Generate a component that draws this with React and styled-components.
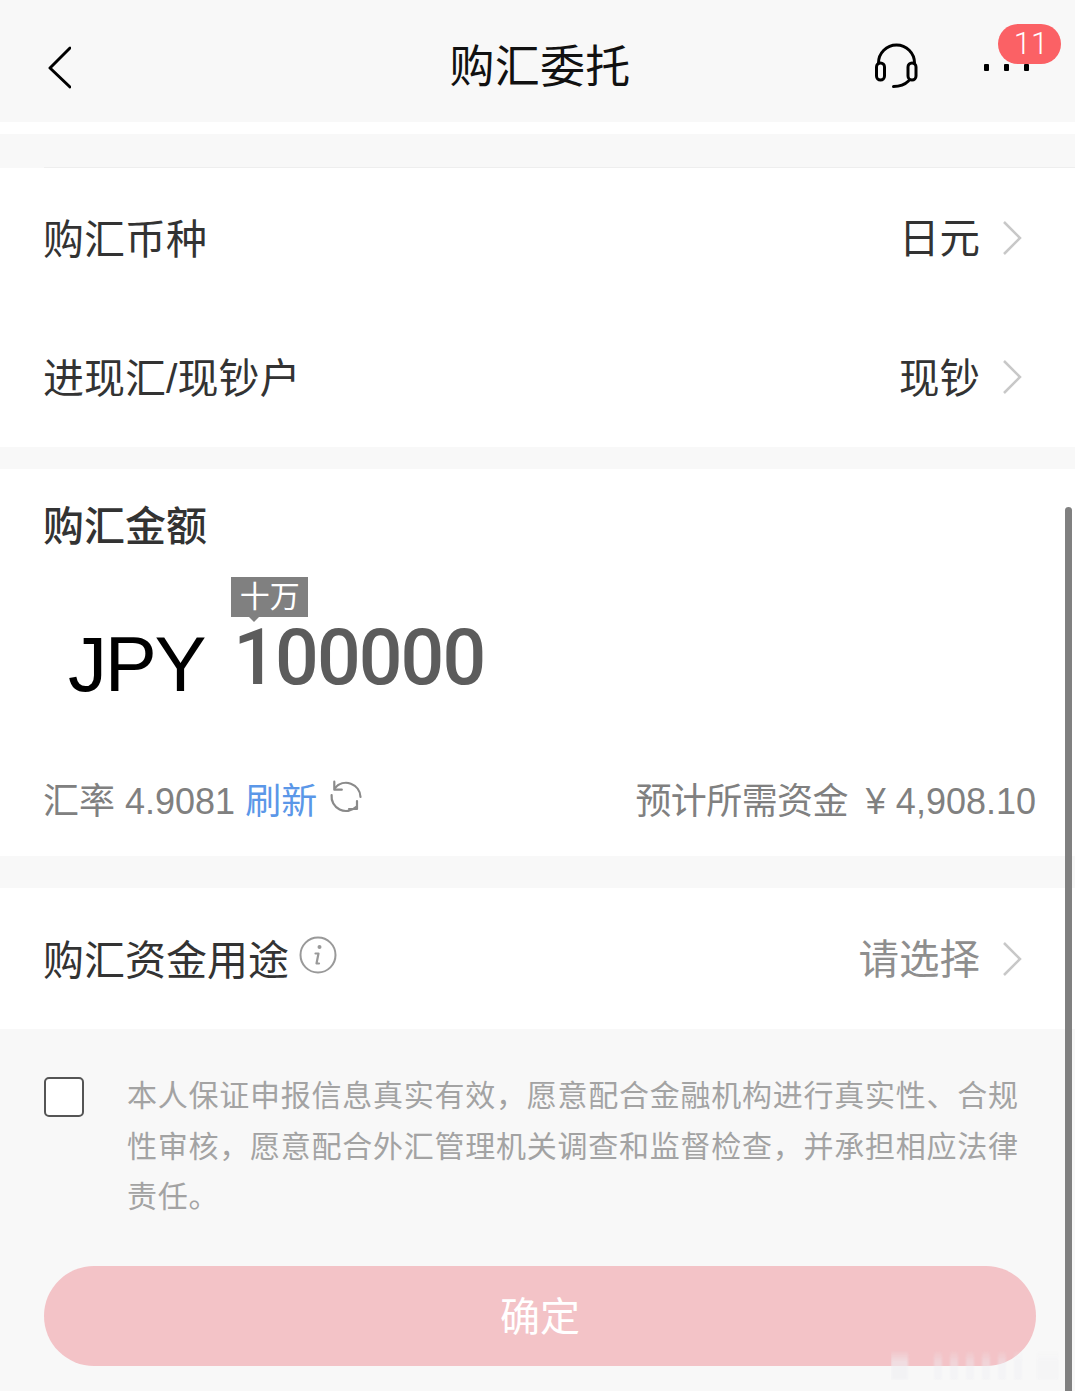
import React from 'react';
import styled, { createGlobalStyle } from 'styled-components';

const GlobalStyle = createGlobalStyle`
  html, body {
    margin: 0;
    padding: 0;
    background: #f8f8f8;
  }
  body {
    font-family: "Liberation Sans", "Noto Sans CJK SC", sans-serif;
  }
`;

const Page = styled.div`
  position: relative;
  width: 1075px;
  height: 1391px;
  overflow: hidden;
  background: #f8f8f8;
`;

const Header = styled.header`
  display: flex;
  align-items: center;
  justify-content: center;
  position: relative;
  height: 122px;
  padding: 12px 0 0 5px;
  box-sizing: border-box;
  background: #f8f8f8;
`;

const Title = styled.h1`
  margin: 0;
  font-size: 45px;
  font-weight: 400;
  line-height: 1;
  letter-spacing: 0.3px;
  color: #111;
`;

const BackIcon = styled.svg`
  position: absolute;
  left: 47px;
  top: 45px;
`;

const HeadsetIcon = styled.svg`
  position: absolute;
  left: 873px;
  top: 43px;
`;

const MoreDots = styled.div`
  position: absolute;
  left: 984px;
  top: 64px;
  display: flex;
  gap: 15px;
`;

const Dot = styled.span`
  width: 5px;
  height: 7px;
  border-radius: 1px;
  background: #000;
`;

const Badge = styled.span`
  position: absolute;
  left: 998px;
  top: 24px;
  width: 63px;
  height: 40px;
  padding-left: 3px;
  box-sizing: border-box;
  border-radius: 20px;
  background: #fb6165;
  color: #fff;
  font-family: "Roboto", sans-serif;
  font-weight: 300;
  font-size: 31px;
  line-height: 40px;
  text-align: center;
`;

const WhiteStrip = styled.div`
  height: 12px;
  background: #fff;
`;

const GrayGap = styled.div`
  height: ${(p) => p.$height}px;
  background: #f8f8f8;
  box-sizing: border-box;
  ${(p) => p.$lined && 'border-bottom: 1px solid #eeeeee; margin-left: 44px;'}
`;

const Section = styled.section`
  background: #fff;
`;

const Row = styled.div`
  display: flex;
  align-items: center;
  justify-content: space-between;
  height: ${(p) => p.$height}px;
  padding: 0 53px 4px 43px;
  box-sizing: border-box;
`;

const RowLabel = styled.span`
  display: flex;
  align-items: center;
  gap: 10px;
  font-size: 41px;
  color: #333;
`;

const RowValue = styled.span`
  display: flex;
  align-items: center;
  gap: 22px;
  font-size: 40.5px;
  color: ${(p) => (p.$muted ? '#8e8e8e' : '#333')};
`;

const ValueChevron = styled.svg`
  margin-top: 4px;
`;

const AmountSection = styled(Section)`
  height: 387px;
  padding: 35px 39px 0 43px;
  box-sizing: border-box;
  display: flex;
  flex-direction: column;
`;

const AmountTitle = styled.div`
  font-size: 41px;
  font-weight: 500;
  line-height: 46px;
  color: #333;
`;

const AmountLine = styled.div`
  display: flex;
  align-items: baseline;
  margin-top: 67px;
  padding-left: 25px;
  height: 94px;
`;

const Currency = styled.span`
  font-size: 78px;
  line-height: 94px;
  letter-spacing: -2.3px;
  color: #000;
`;

const AmountValue = styled.span`
  position: relative;
  margin-left: 29px;
  font-family: "Roboto", sans-serif;
  font-weight: 500;
  font-size: 77px;
  line-height: 94px;
  color: #5c5c5c;
  letter-spacing: -1.9px;
  top: -7px;
`;

const UnitTip = styled.span`
  position: absolute;
  left: -2px;
  top: -34px;
  width: 77px;
  height: 40px;
  background: #808080;
  color: #fff;
  font-family: "Liberation Sans", "Noto Sans CJK SC", sans-serif;
  font-size: 30px;
  font-weight: 400;
  letter-spacing: 0;
  line-height: 40px;
  text-align: center;

  &::after {
    content: '';
    position: absolute;
    left: 18px;
    top: 40px;
    border-left: 5px solid transparent;
    border-right: 5px solid transparent;
    border-top: 5px solid #808080;
  }
`;

const RateLine = styled.div`
  display: flex;
  align-items: center;
  justify-content: space-between;
  margin-top: 61px;
  font-size: 36px;
  color: #808080;
`;

const RateLeft = styled.span`
  display: flex;
  align-items: center;
`;

const RefreshLink = styled.span`
  margin-left: 10px;
  color: #5b97e8;
`;

const RefreshIcon = styled.svg`
  margin-left: 11px;
  margin-top: -4px;
`;

const RateRight = styled.span`
  display: flex;
  align-items: baseline;
`;

const FundsLabel = styled.span`
  margin-right: 18px;
  letter-spacing: -0.6px;
`;

const InfoIcon = styled.svg`
  margin-top: -4px;
`;

const Consent = styled.div`
  display: flex;
  padding: 48px 56px 0 44px;
`;

const CheckBox = styled.span`
  flex: none;
  width: 40px;
  height: 40px;
  box-sizing: border-box;
  border: 2px solid #555;
  border-radius: 5px;
  margin-right: 43px;
  background: #fff;
`;

const ConsentText = styled.p`
  margin: -6px 0 0;
  font-size: 30px;
  line-height: 50.5px;
  letter-spacing: 0.75px;
  color: #a3a3a3;
`;

const ConfirmButton = styled.button`
  display: block;
  width: 992px;
  height: 100px;
  margin: 43px 0 0 44px;
  border: none;
  border-radius: 50px;
  background: #f3c3c7;
  color: #fff;
  font-family: inherit;
  font-size: 40px;
  padding: 0 0 4px;
`;

const ScrollBar = styled.div`
  position: absolute;
  left: 1065px;
  top: 507px;
  width: 7px;
  bottom: 0;
  border-radius: 4px 4px 0 0;
  background: #808080;
`;

const Watermark = styled.div`
  position: absolute;
  left: 891px;
  top: 1350px;
  display: flex;
  height: 30px;
  mask-image: linear-gradient(to bottom, transparent, #000 40%);
`;

const WatermarkBar = styled.span`
  width: ${(p) => p.$width}px;
  margin-right: ${(p) => p.$gap}px;
  background: rgba(238, 238, 242, ${(p) => p.$alpha});
  border-radius: 2px;
  filter: blur(1px);
`;

const Chevron = () => (
  <ValueChevron width="20" height="36" viewBox="0 0 20 36" fill="none">
    <path d="M2 2l16 16L2 34" stroke="#c8c8c8" strokeWidth="2.500" />
  </ValueChevron>
);

export default function App() {
  return (
    <Page>
      <GlobalStyle />
      <Header>
        <BackIcon width="24" height="44" viewBox="0 0 24 44" fill="none">
          <path d="M23 3L3 23l20 19" stroke="#000" strokeWidth="3" strokeLinecap="round" strokeLinejoin="round" />
        </BackIcon>
        <Title>购汇委托</Title>
        <HeadsetIcon width="48" height="46" viewBox="0 0 48 46" fill="none">
          <path d="M5.500 20A18 18 0 0 1 41.500 20" stroke="#000" strokeWidth="3" strokeLinecap="round" />
          <rect x="3.500" y="20" width="8" height="17" rx="4" stroke="#000" strokeWidth="3" />
          <rect x="35" y="20" width="8" height="17" rx="4" stroke="#000" strokeWidth="3" />
          <path d="M20.500 43.500c6 0 11-1.500 15-5.500" stroke="#000" strokeWidth="3" strokeLinecap="round" />
        </HeadsetIcon>
        <MoreDots>
          <Dot />
          <Dot />
          <Dot />
        </MoreDots>
        <Badge>11</Badge>
      </Header>
      <WhiteStrip />
      <GrayGap $height={34} $lined />
      <Section>
        <Row $height={139}>
          <RowLabel>购汇币种</RowLabel>
          <RowValue>日元<Chevron /></RowValue>
        </Row>
        <Row $height={140}>
          <RowLabel>进现汇/现钞户</RowLabel>
          <RowValue>现钞<Chevron /></RowValue>
        </Row>
      </Section>
      <GrayGap $height={22} />
      <AmountSection>
        <AmountTitle>购汇金额</AmountTitle>
        <AmountLine>
          <Currency>JPY</Currency>
          <AmountValue>
            <UnitTip>十万</UnitTip>
            100000
          </AmountValue>
        </AmountLine>
        <RateLine>
          <RateLeft>
            汇率 4.9081
            <RefreshLink>刷新</RefreshLink>
            <RefreshIcon width="36" height="36" viewBox="0 0 36 36" fill="none">
              <path d="M7 10A14.500 14.500 0 0 1 32.500 19" stroke="#8a8a8a" strokeWidth="2.200" strokeLinecap="round" />
              <path d="M3.600 17A14.500 14.500 0 0 0 28 29" stroke="#8a8a8a" strokeWidth="2.200" strokeLinecap="round" />
              <path d="M6.300 3.700v8h7.500M29 23v8h-8" stroke="#8a8a8a" strokeWidth="2.200" strokeLinecap="round" strokeLinejoin="round" />
            </RefreshIcon>
          </RateLeft>
          <RateRight>
            <FundsLabel>预计所需资金</FundsLabel>
            ¥ 4,908.10
          </RateRight>
        </RateLine>
      </AmountSection>
      <GrayGap $height={32} />
      <Section>
        <Row $height={141}>
          <RowLabel>
            购汇资金用途
            <InfoIcon width="38" height="38" viewBox="0 0 38 38" fill="none">
              <circle cx="19" cy="19" r="17.500" stroke="#999" strokeWidth="2" />
              <circle cx="20.500" cy="11" r="2" fill="#999" />
              <path d="M16.500 17.500h3l-2 10h2.500" stroke="#999" strokeWidth="2.200" strokeLinecap="round" strokeLinejoin="round" />
            </InfoIcon>
          </RowLabel>
          <RowValue $muted>请选择<Chevron /></RowValue>
        </Row>
      </Section>
      <Consent>
        <CheckBox />
        <ConsentText>
          本人保证申报信息真实有效，愿意配合金融机构进行真实性、合规性审核，愿意配合外汇管理机关调查和监督检查，并承担相应法律责任。
        </ConsentText>
      </Consent>
      <ConfirmButton>确定</ConfirmButton>
      <ScrollBar />
      <Watermark>
        <WatermarkBar $width={17} $gap={26} $alpha={0.6} />
        <WatermarkBar $width={8} $gap={8} $alpha={0.4} />
        <WatermarkBar $width={8} $gap={8} $alpha={0.4} />
        <WatermarkBar $width={8} $gap={8} $alpha={0.4} />
        <WatermarkBar $width={8} $gap={8} $alpha={0.4} />
        <WatermarkBar $width={8} $gap={8} $alpha={0.4} />
        <WatermarkBar $width={8} $gap={15} $alpha={0.4} />
        <WatermarkBar $width={22} $gap={0} $alpha={0.3} />
      </Watermark>
    </Page>
  );
}
